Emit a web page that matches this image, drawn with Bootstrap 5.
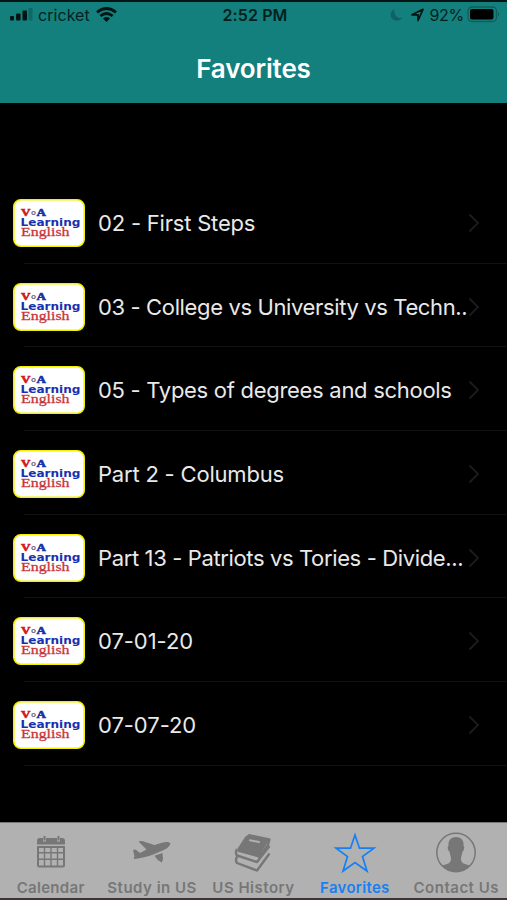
<!DOCTYPE html>
<html lang="en">
<head>
<meta charset="utf-8">
<meta name="viewport" content="width=device-width, initial-scale=1">
<title>Favorites</title>
<link href="https://cdn.jsdelivr.net/npm/bootstrap@5.3.0/dist/css/bootstrap.min.css" rel="stylesheet">
<style>
body{background:#000;font-family:Inter,"Liberation Sans",sans-serif;height:900px;overflow:hidden}
svg{display:block;flex:none}
.top-bar{height:103px;background:#13807d;border-top:2px solid #041514}
.status{height:27px;padding:0 7px 0 10px;font-size:16px;line-height:26px;color:#032020}
.status>*{flex:1 1 0;margin-top:-2px}
.carrier{letter-spacing:.05px;margin:0 6px 0 5px}
.percent{letter-spacing:-.3px;margin:0 3px 0 5px}
.clock{font-weight:600;letter-spacing:.1px}
.page-title{font-size:26px;font-weight:600;line-height:32px;margin:24px 0 0;letter-spacing:-.15px;color:#fff}
.favs{padding-top:77px;height:719px}
.fav{height:83.7px;padding-left:13px;color:#e9e9e9}
.fav-body{height:83.7px;padding-top:2px}
.fav:after{content:"";display:block;height:1px;margin:-1px 0 0 11px;background:#121212}
.fav-name{font-size:22px;line-height:30px;width:370px;margin-left:13px;white-space:nowrap;letter-spacing:-.2px}
.fav-name.snug{letter-spacing:-.29px}
.fav-name.tight{letter-spacing:-.37px}
.fav-name.digits{letter-spacing:-.05px}
.voa,.eng{font-family:"Liberation Serif",serif;stroke-width:.6}
.voa{font-size:11px;font-weight:700}
.red{fill:#d31920;stroke:#d31920}
.blue{fill:#1830a8;stroke:#1830a8}
.voa-o{font:700 7px "Liberation Sans",sans-serif;fill:#667}
.learn{font:700 10.7px "DejaVu Sans",sans-serif;fill:#1830b0}
.eng{font-size:13.5px;fill:#c9353a;stroke:#c9353a;stroke-width:.3}
.tabs{height:78px;background:#b1b1b1;border-top:1px solid #777;border-bottom:2px solid #3b3336;padding:0}
.tab{width:101.4px;color:#777;text-decoration:none;flex:none}
.tab svg{margin-top:8px;height:44px;width:44px}
.tab span{font-size:15px;font-weight:600;line-height:20px;margin-top:3px;white-space:nowrap;letter-spacing:.5px}
.tab .near{letter-spacing:.3px}
.tab.active{color:#1680f2}
</style>
<script src="https://cdn.jsdelivr.net/npm/bootstrap@5.3.0/dist/js/bootstrap.bundle.min.js"></script>
</head>
<body>
<header class="top-bar">
<div class="status d-flex align-items-center">
<div class="d-flex align-items-center">
<svg width="23" height="15" viewBox="0 0 23 15"><g fill="#021313"><rect y="9" width="4" height="4.5" rx="1"/><rect x="6" y="6.5" width="4.5" height="7" rx="1"/><rect x="12.5" y="3.5" width="4.5" height="10" rx="1"/></g><rect x="18.5" y="1" width="4" height="12.5" rx="1" fill="#0d6866"/></svg>
<span class="carrier">cricket</span>
<svg width="21" height="16" viewBox="0 0 21 16"><g fill="none" stroke="#021313" stroke-width="2.8"><path d="M1 5.3Q10.5-2.3 20 5.3M4.400 9Q10.5 4 16.600 9"/></g><path d="M7 11.500Q10.500 8.700 14 11.500L10.500 15Z" fill="#021313"/></svg>
</div>
<div class="clock text-center">2:52 PM</div>
<div class="d-flex align-items-center justify-content-end">
<svg width="13" height="14" viewBox="0 0 13 14"><path d="M4.500 1.200C1.500 2.500.3 5 .8 8c1 5.300 8.800 6.400 11.700 1.800C8.300 11 3.200 7.500 4.500 1.200Z" fill="#126064"/></svg>
<svg class="ms-2" width="13" height="14" viewBox="0 0 13 14"><path d="M1 6.800 12 1.300 7 12.500V6.800Z" fill="none" stroke="#021313" stroke-width="1.700" stroke-linejoin="round"/></svg>
<span class="percent">92%</span>
<svg width="33" height="17" viewBox="0 0 33 17"><rect x="1" y="1" width="28.500" height="14.500" rx="4" fill="none" stroke="#0c5f5d" stroke-width="1.300"/><rect x="3" y="3" width="23.500" height="10.500" rx="2" fill="#000"/><path d="M31 5.800Q33.500 8.300 31 10.800Z" fill="#0c5f5d"/></svg>
</div>
</div>
<h1 class="page-title text-center">Favorites</h1>
</header>

<main class="favs" id="favs"></main>

<nav class="tabs d-flex">
<a class="tab d-flex flex-column align-items-center" href="#"><svg viewBox="0 0 44 44"><path fill="currentColor" fill-rule="evenodd" d="M8 10Q8 7 10.500 7H14V10.500H17V7H28V10.500H31V7H33.500Q36 7 36 10V13.500H8ZM8 15H36V34Q36 36.500 33.500 36.500H10.500Q8 36.500 8 34ZM10 17V21H14.800V17ZM16.200 17V21H21.300V17ZM22.700 17V21H27.800V17ZM29.200 17V21H34V17ZM10 22.500V27.500H14.800V22.500ZM16.200 22.500V27.500H21.300V22.500ZM22.700 22.500V27.500H27.800V22.500ZM29.200 22.500V27.500H34V22.500ZM10 29V34.500H14.800V29ZM16.200 29V34.500H21.300V29ZM22.700 29V34.500H27.800V29ZM29.200 29V34.500H34V29Z"/><path d="M15.500 5V9.500M29.500 5V9.500" stroke="currentColor" stroke-width="2"/></svg><span class="near">Calendar</span></a>
<a class="tab d-flex flex-column align-items-center" href="#"><svg viewBox="0 0 44 44"><path fill="currentColor" d="M8.500 10.500Q12 9.500 15 11L24.500 14 32 11.800C36 10.500 39.500 11 40.500 12.500 40 15.500 36 18.500 30 20.500 26 22.500 20 25 13 26.500L5 28Q3 27.500 4.500 25.500L3 19 5.500 18.500 10 22 16.500 18.500ZM24.500 24.800 32.500 22 33 28.500 31.500 31.500 27.500 28.800Z"/></svg><span>Study in US</span></a>
<a class="tab d-flex flex-column align-items-center" href="#"><svg viewBox="0 0 44 44"><path fill="currentColor" d="M18 3 39.500 7.500 28 24.500 6 18.500 14 6Z"/><path fill="none" stroke="#b1b1b1" stroke-width="2" stroke-linecap="round" d="M19 9.200 28 11"/><g fill="none" stroke="currentColor" stroke-width="2.400" stroke-linejoin="round"><path d="M6 18Q4 22 6 24.500L26 31 38.500 15M38.500 8 37 14 27 26.500M6 25.500Q4 29.500 6 32L26 39.500 38.500 22.500"/><path d="M7 19.500 27 25"/></g></svg><span>US History</span></a>
<a class="tab active d-flex flex-column align-items-center" href="#"><svg viewBox="0 0 44 44"><path fill="none" stroke="currentColor" stroke-width="1.700" d="M22 4 26.500 17.200H41L29.500 25.600 34 40 22 31.500 10 40 14.500 25.600 3 17.200H17.500Z"/></svg><span class="near">Favorites</span></a>
<a class="tab d-flex flex-column align-items-center" href="#"><svg viewBox="0 0 44 44"><circle cx="22" cy="21.500" r="19.200" fill="none" stroke="currentColor" stroke-width="1.500"/><path fill="currentColor" d="M22 6C27.500 6 30 9.500 29.500 15 31 15.500 30 20 28.500 20.500 28 24 27 25 27 28 27 32.500 31 33 36 34.500Q29.500 40.500 22 40.500T8 34.500C13 33 17 32.500 17 28 17 25 16 24 15.500 20.500 14 20 13 15.500 14.500 15 14 9.500 16.500 6 22 6Z"/></svg><span>Contact Us</span></a>
</nav>
<script>
const items = [
  ["02 - First Steps", ""],
  ["03 - College vs University vs Techn..", "tight"],
  ["05 - Types of degrees and schools", "snug"],
  ["Part 2 - Columbus", ""],
  ["Part 13 - Patriots vs Tories - Divide...", "tight"],
  ["07-01-20", "digits"],
  ["07-07-20", "digits"]
];
const logo = `<svg width="72" height="48" viewBox="0 0 72 48">
<rect x=".8" y=".8" width="70.400" height="46.400" rx="7" fill="#fff" stroke="#f2f200" stroke-width="1.600"/>
<text class="voa red" x="8" y="17" textLength="9.500" lengthAdjust="spacingAndGlyphs">V</text>
<text class="voa-o" x="18" y="16" textLength="5" lengthAdjust="spacingAndGlyphs">o</text>
<text class="voa blue" x="23.500" y="17" textLength="9.500" lengthAdjust="spacingAndGlyphs">A</text>
<text class="learn" x="7.500" y="26.500" textLength="60" lengthAdjust="spacingAndGlyphs">Learning</text>
<text class="eng" x="8" y="36.500" textLength="48.500" lengthAdjust="spacingAndGlyphs">English</text></svg>`;
const chevron = `<svg width="14" height="20" viewBox="0 0 14 20"><path d="M1.500 1.500 10 10 1.500 18.500" fill="none" stroke="#1c1c1c" stroke-width="1.800"/></svg>`;
document.getElementById("favs").innerHTML = items.map(([name, fit]) =>
  `<div class="fav"><div class="fav-body d-flex align-items-center">${logo}<span class="fav-name ${fit}">${name}</span>${chevron}</div></div>`).join("");
</script>
</body>
</html>
